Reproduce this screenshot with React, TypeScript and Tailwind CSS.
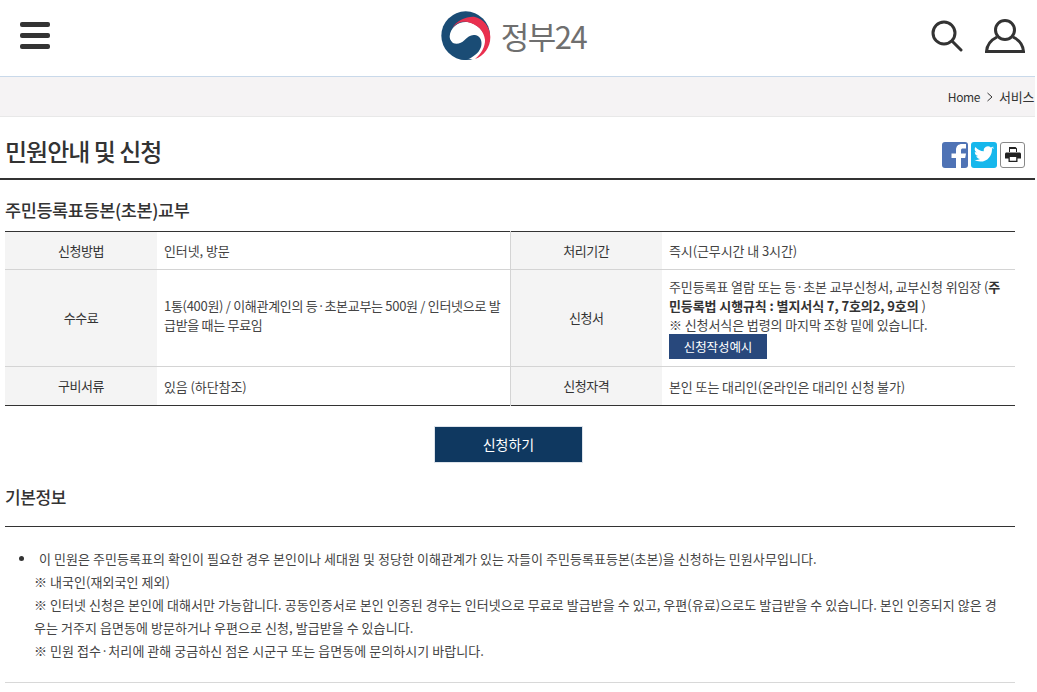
import React from "react";

const font = { fontFamily: '"Noto Sans CJK KR", "Noto Sans", sans-serif' };

function Logo() {
  return (
    <svg width="52" height="50" viewBox="30 20 156 150" className="block shrink-0">
      <circle cx="110" cy="94" r="73" fill="#1a4c75" />
      <path d="M62 96 C64 68 90 50 115 53 C146 57 168 84 170 106 C172 128 160 150 138 164 C120 168 90 150 80 125 C70 118 62 108 62 96 Z" fill="#ffffff" />
      <path d="M68 74 C82 47 112 36 135 37 C163 42 184 68 184 98 C184 130 165 155 138 164 C157 148 169 126 168 106 C165 80 145 59 115 53 C95 50 78 58 68 74 Z" fill="#e9304f" />
      <path d="M64 106 C72 124 94 120 106 108 C116 97 126 90 138 92 C155 95 161 112 156 128 C149 148 132 158 112 167 C90 167 70 150 60 125 Z" fill="#1a4c75" />
    </svg>
  );
}

const thBase = "bg-[#f4f4f4] font-normal text-[13px] tracking-[-0.5px] text-[#333] text-center align-middle p-0";
const thLeft = "bg-[#f4f4f4] font-normal text-[13px] tracking-[-0.5px] text-[#333] text-center align-middle p-0 border-l border-[#d4d4d4]";
const tdBase = "pl-[7px] pr-[12px] align-middle text-[13px] leading-[19px] text-[#444] tracking-[-0.1px] break-all";
const tdWide = "pl-[7px] pr-[8px] pb-[7px] align-middle text-[13px] leading-[19px] text-[#444] tracking-[-0.3px] break-all";

export default function App() {
  return (
    <div style={font} className="w-[1035px] h-[692px] overflow-hidden bg-white text-[#333]">
      <header className="h-[77px] border-b border-[#c9d9ea] flex items-center pl-[20px] pr-[10px]">
        <div className="flex-1 flex">
          <div className="w-[30px] flex flex-col gap-[6px] mt-[-5px]">
            <span className="block h-[5px] rounded-[2px] bg-[#333]" />
            <span className="block h-[5px] rounded-[2px] bg-[#333]" />
            <span className="block h-[5px] rounded-[2px] bg-[#333]" />
          </div>
        </div>
        <div className="flex items-center mt-[-5px] mr-[20px]">
          <Logo />
          <span className="text-[31px] leading-none text-[#6f6f6f] tracking-[-1.5px] ml-[10px]">정부24</span>
        </div>
        <div className="flex-1 flex items-center justify-end gap-[22px] mt-[-5px]">
          <svg width="32" height="32" viewBox="0 0 32 32" fill="none" stroke="#333" strokeWidth="3">
            <circle cx="13" cy="13" r="11" />
            <path d="M21 21 L30 30" strokeLinecap="round" />
          </svg>
          <svg width="40" height="34" viewBox="0 0 40 34" fill="none" stroke="#333" strokeWidth="3">
            <circle cx="20" cy="11" r="9.5" />
            <path d="M12 18 C6 21 2 25 1.5 32.5 L38.5 32.5 C38 25 34 21 28 18" />
          </svg>
        </div>
      </header>

      <div className="h-[40px] bg-[#f5f3f4] border-b border-[#e8e8e8] flex items-center justify-end overflow-hidden text-[12px] text-[#333] tracking-[-0.4px]">
        <span>Home</span>
        <svg width="8" height="10" viewBox="0 0 8 10" fill="none" stroke="#333" className="ml-[6px] mr-[5px]"><path d="M1.5 1 L6 5 L1.5 9" /></svg>
        <span className="whitespace-nowrap w-[36px] text-[13px] tracking-[-0.2px]">서비스</span>
      </div>

      <div className="h-[63px] border-b-2 border-[#333] flex items-center justify-between pl-[5px] pr-[10px]">
        <h1 className="text-[24px] font-medium leading-none text-[#333] mt-[7px] tracking-[-1px]">민원안내 및 신청</h1>
        <div className="flex gap-[3px] mt-[14px] items-center">
          <div className="w-[26px] h-[26px] rounded-[3px] bg-[#4f73b5] flex items-end justify-end overflow-hidden">
            <svg width="20" height="25" viewBox="0 0 20 25" fill="#fff"><path d="M8 25 V15 H3.5 V10.5 H8 V7 C8 3 10.5 1 14 1 H18 V5.5 H15 C13.5 5.5 13 6 13 7.5 V10.5 H18 L17.2 15 H13 V25 Z" /></svg>
          </div>
          <div className="w-[26px] h-[26px] rounded-[3px] bg-[#16b7ec] flex items-center justify-center">
            <svg width="20" height="17" viewBox="0 0 24 20" fill="#fff"><path d="M23.95 2.4a9.8 9.8 0 0 1-2.82.77 4.9 4.9 0 0 0 2.16-2.71 9.8 9.8 0 0 1-3.12 1.19 4.91 4.91 0 0 0-8.37 4.48A13.94 13.94 0 0 1 1.67.98a4.9 4.9 0 0 0 1.52 6.55 4.9 4.9 0 0 1-2.22-.61v.06a4.91 4.91 0 0 0 3.94 4.81 4.9 4.9 0 0 1-2.22.08 4.92 4.92 0 0 0 4.59 3.41A9.86 9.86 0 0 1 0 16.32 13.9 13.9 0 0 0 7.55 18.5c9.05 0 14-7.5 14-14v-.64a10 10 0 0 0 2.4-2.46z" /></svg>
          </div>
          <div className="w-[25px] h-[26px] rounded-[3px] border border-[#888] bg-white flex items-center justify-center">
            <svg width="16" height="15" viewBox="0 0 16 15" fill="#222"><path d="M4 0 H10.5 L12 1.5 V5 H11 V2 H5 V5 H4 Z" /><path fillRule="evenodd" d="M1.5 5.5 H14.5 C15.3 5.5 16 6.2 16 7 V11.5 H12.5 V15 H3.5 V11.5 H0 V7 C0 6.2 .7 5.5 1.5 5.5 Z M4.8 10 V13.8 H11.2 V10 Z" /></svg>
          </div>
        </div>
      </div>

      <h2 className="pl-[5px] mt-[18px] text-[17.5px] leading-[24px] font-medium text-[#333] tracking-[-0.4px]">주민등록표등본(초본)교부</h2>

      <div className="ml-[5px] w-[1010px] mt-[9px]">
        <table className="w-full table-fixed border-collapse border-y border-[#333]">
          <colgroup>
            <col className="w-[152px]" />
            <col className="w-[353px]" />
            <col className="w-[152px]" />
            <col />
          </colgroup>
          <tbody>
            <tr className="h-[38px] border-b border-[#d4d4d4]">
              <th className={thBase}>신청방법</th>
              <td className={tdBase}>인터넷, 방문</td>
              <th className={thLeft}>처리기간</th>
              <td className={tdBase}>즉시(근무시간 내 3시간)</td>
            </tr>
            <tr className="h-[97px] border-b border-[#d4d4d4]">
              <th className={thBase}>수수료</th>
              <td className={tdWide}>1통(400원) / 이해관계인의 등·초본교부는 500원 / 인터넷으로 발급받을 때는 무료임</td>
              <th className={thLeft}>신청서</th>
              <td className={tdBase}>
                주민등록표 열람 또는 등·초본 교부신청서, 교부신청 위임장 (<b className="font-bold text-[#333]">주</b>
                <br /><b className="font-bold text-[#333]">민등록법 시행규칙 : 별지서식 7, 7호의2, 9호의 </b>)
                <br />※ 신청서식은 법령의 마지막 조항 밑에 있습니다.
                <div className="w-[98px] h-[25px] bg-[#28487c] text-white text-[12.5px] flex items-center justify-center">신청작성예시</div>
              </td>
            </tr>
            <tr className="h-[39px]">
              <th className={thBase}>구비서류</th>
              <td className={tdBase}>있음 (하단참조)</td>
              <th className={thLeft}>신청자격</th>
              <td className={tdBase}>본인 또는 대리인(온라인은 대리인 신청 불가)</td>
            </tr>
          </tbody>
        </table>
      </div>

      <div className="ml-[5px] w-[1010px] pr-[3px] flex justify-center mt-[20px]">
        <div className="w-[149px] h-[37px] bg-[#0f3860] border border-[#dde3ea] text-white text-[14px] flex items-center justify-center">신청하기</div>
      </div>

      <h2 className="pl-[5px] mt-[22px] text-[17px] leading-[24px] font-medium text-[#333] tracking-[-0.4px]">기본정보</h2>

      <div className="ml-[5px] mt-[17px] border-t border-[#333] w-[1010px]" />

      <ul className="ml-[5px] w-[1010px] pt-[20px] pb-[20px] border-b border-[#d8d8d8] text-[13px] leading-[23px] text-[#444] tracking-[0.05px] break-all">
        <li className="relative pl-[29px] pr-[8px]">
          <span className="absolute left-[14px] top-[9px] w-[5px] h-[5px] rounded-full bg-[#333]" />
          <span className="pl-[5px]">이 민원은 주민등록표의 확인이 필요한 경우 본인이나 세대원 및 정당한 이해관계가 있는 자들이 주민등록표등본(초본)을 신청하는 민원사무입니다.</span>
          <br />※ 내국인(재외국인 제외)
          <br />※ 인터넷 신청은 본인에 대해서만 가능합니다. 공동인증서로 본인 인증된 경우는 인터넷으로 무료로 발급받을 수 있고, 우편(유료)으로도 발급받을 수 있습니다. 본인 인증되지 않은 경우는 거주지 읍면동에 방문하거나 우편으로 신청, 발급받을 수 있습니다.
          <br />※ 민원 접수·처리에 관해 궁금하신 점은 시군구 또는 읍면동에 문의하시기 바랍니다.
        </li>
      </ul>
    </div>
  );
}
